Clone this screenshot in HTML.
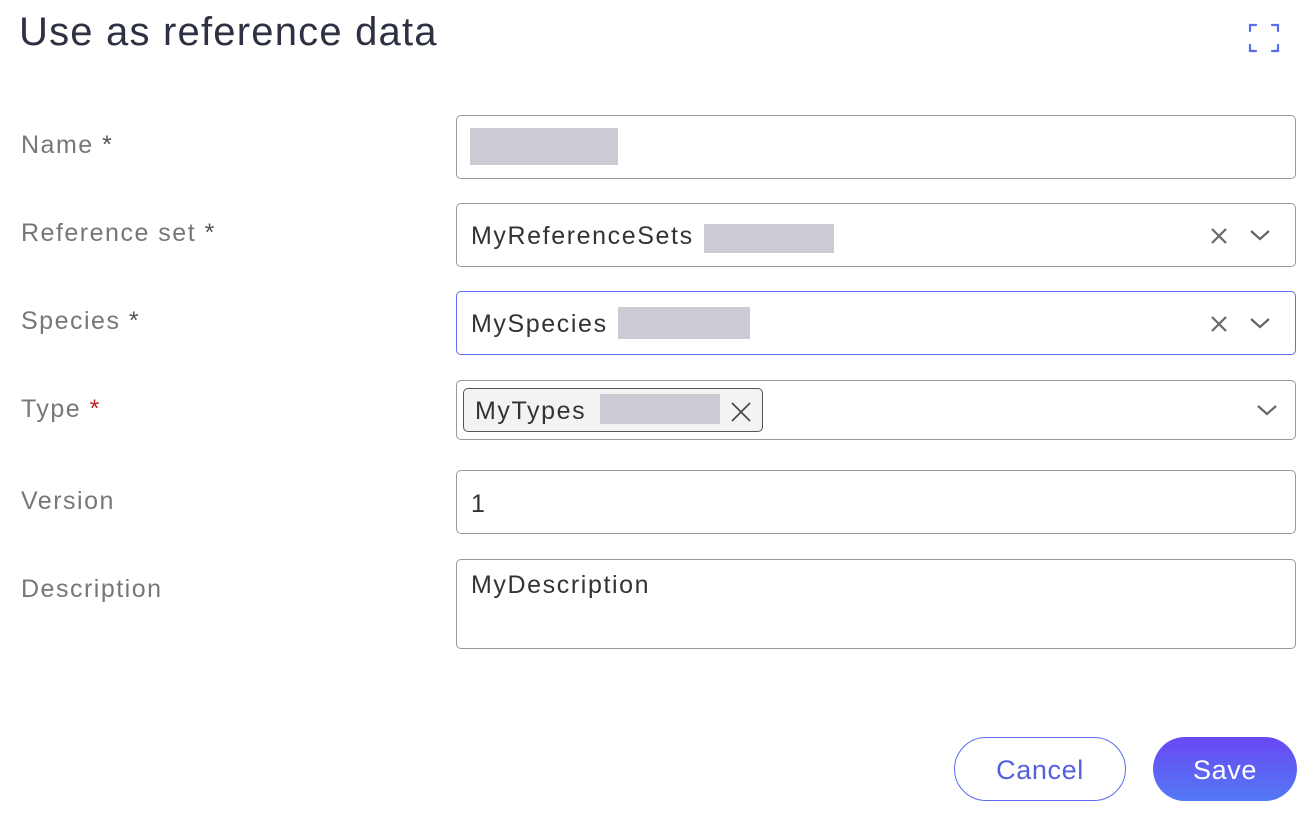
<!DOCTYPE html>
<html><head><style>
body{margin:0;width:1308px;height:820px;background:#fff;font-family:"Liberation Sans",sans-serif;position:relative;overflow:hidden}
.a{position:absolute}
.lbl{position:absolute;left:21px;font-size:25px;color:#777;letter-spacing:1.5px}
.box{position:absolute;left:456px;width:838px;border:1px solid #9a9a9a;border-radius:5px;background:#fff}
.txt{position:absolute;font-size:25px;color:#333;letter-spacing:1.6px}
.blk{position:absolute;background:#cbcbd3}
</style></head><body>
<div class="a" style="left:19px;top:10px;font-size:40px;color:#2d3142;letter-spacing:1.2px">Use as reference data</div>
<svg class="a" style="left:1248px;top:22px" width="32" height="32" viewBox="0 0 32 32" fill="none" stroke="#5a6cf0" stroke-width="2.2" stroke-linecap="round"><path d="M2 9V3h6M24 3h6v6M30 23v6h-6M8 29H2v-6"/></svg>

<div class="lbl" style="top:131px">Name <span style="color:#555">*</span></div>
<div class="box" style="top:115px;height:62px"></div>
<div class="blk" style="left:470px;top:128px;width:148px;height:37px"></div>

<div class="lbl" style="top:219px">Reference set <span style="color:#555">*</span></div>
<div class="box" style="top:203px;height:62px"></div>
<div class="txt" style="left:471px;top:222px">MyReferenceSets</div>
<div class="blk" style="left:704px;top:224px;width:130px;height:29px"></div>

<div class="lbl" style="top:307px">Species <span style="color:#555">*</span></div>
<div class="box" style="top:291px;height:62px;border-color:#5a6cf0"></div>
<div class="txt" style="left:471px;top:310px">MySpecies</div>
<div class="blk" style="left:618px;top:307px;width:132px;height:32px"></div>

<svg class="a" style="left:1209px;top:226px" width="20" height="20" viewBox="0 0 20 20" stroke="#666" stroke-width="2.2"><path d="M3 3l14 14M17 3L3 17"/></svg>
<svg class="a" style="left:1249px;top:228px" width="22" height="14" viewBox="0 0 22 14" fill="none" stroke="#666" stroke-width="2.2"><path d="M2 3l9 8 9-8"/></svg>
<svg class="a" style="left:1209px;top:314px" width="20" height="20" viewBox="0 0 20 20" stroke="#666" stroke-width="2.2"><path d="M3 3l14 14M17 3L3 17"/></svg>
<svg class="a" style="left:1249px;top:316px" width="22" height="14" viewBox="0 0 22 14" fill="none" stroke="#666" stroke-width="2.2"><path d="M2 3l9 8 9-8"/></svg>

<div class="lbl" style="top:395px">Type <span style="color:#b22">*</span></div>
<div class="box" style="top:380px;height:58px"></div>
<div class="a" style="left:463px;top:388px;width:298px;height:42px;border:1px solid #555;border-radius:5px;background:#f3f3f3"></div>
<div class="txt" style="left:475px;top:397px">MyTypes</div>
<div class="blk" style="left:600px;top:394px;width:120px;height:30px"></div>
<svg class="a" style="left:730px;top:401px" width="22" height="22" viewBox="0 0 22 22" stroke="#444" stroke-width="1.6"><path d="M2 2l18 18M20 2L2 20"/></svg>
<svg class="a" style="left:1256px;top:403px" width="22" height="14" viewBox="0 0 22 14" fill="none" stroke="#666" stroke-width="2.2"><path d="M2 3l9 8 9-8"/></svg>

<div class="lbl" style="top:487px">Version</div>
<div class="box" style="top:470px;height:62px"></div>
<div class="txt" style="left:471px;top:490px">1</div>

<div class="lbl" style="top:575px">Description</div>
<div class="box" style="top:559px;height:88px"></div>
<div class="txt" style="left:471px;top:571px">MyDescription</div>

<div class="a" style="left:954px;top:737px;width:172px;height:64px;border:1.5px solid #5a6cf0;border-radius:32px;box-sizing:border-box;color:#5361e0;font-size:27px;text-align:center;line-height:64px;letter-spacing:0.6px">Cancel</div>
<div class="a" style="left:1153px;top:737px;width:144px;height:64px;border-radius:32px;background:linear-gradient(#6a48f4,#5379f4);color:#fff;font-size:27px;text-align:center;line-height:66px;letter-spacing:0.6px">Save</div>
</body></html>
